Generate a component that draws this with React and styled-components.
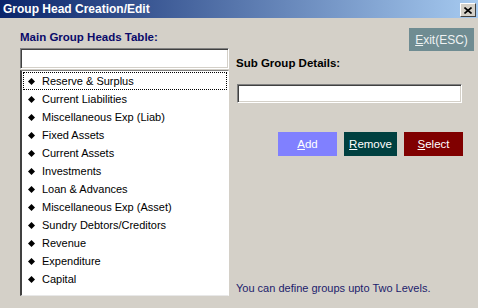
import React from 'react';
import styled, { createGlobalStyle } from 'styled-components';

const GlobalStyle = createGlobalStyle`
    html, body {
        margin: 0;
        padding: 0;
        background: #d4d0c8;
    }
    * {
        box-sizing: border-box;
    }
`;

const groups = [
    'Reserve & Surplus',
    'Current Liabilities',
    'Miscellaneous Exp (Liab)',
    'Fixed Assets',
    'Current Assets',
    'Investments',
    'Loan & Advances',
    'Miscellaneous Exp (Asset)',
    'Sundry Debtors/Creditors',
    'Revenue',
    'Expenditure',
    'Capital',
];

const Window = styled.div`
    width: 478px;
    height: 308px;
    display: flex;
    flex-direction: column;
    background: #d4d0c8;
    font-family: "Liberation Sans", Arial, sans-serif;
    font-size: 11px;
    overflow: hidden;
`;

const TitleBar = styled.div`
    height: 18px;
    flex: none;
    display: flex;
    align-items: center;
    justify-content: space-between;
    padding: 0 2px 0 3px;
    background: linear-gradient(to right, #0a246a, #a6caf0);
`;

const Title = styled.span`
    color: #fff;
    font-weight: bold;
    font-size: 12px;
`;

const CloseButton = styled.div`
    width: 16px;
    height: 14px;
    margin-top: 2px;
    display: flex;
    align-items: center;
    justify-content: center;
    background: #d4d0c8;
    border-top: 1px solid #fff;
    border-left: 1px solid #fff;
    border-right: 1px solid #404040;
    border-bottom: 1px solid #404040;
`;

const Body = styled.div`
    flex: 1;
    display: flex;
    gap: 7px;
    padding: 0 4px 0 20px;
`;

const LeftColumn = styled.div`
    width: 209px;
    display: flex;
    flex-direction: column;
    padding-top: 12px;
`;

const RightColumn = styled.div`
    flex: 1;
    display: flex;
    flex-direction: column;
    padding-top: 10px;
    padding-bottom: 13px;
`;

const Label = styled.div`
    color: ${props => props.color || '#0a0a6a'};
    font-weight: bold;
    font-size: 11.5px;
    line-height: 14px;
    margin-top: ${props => props.top || 0}px;
`;

const TextField = styled.div`
    height: ${props => props.h}px;
    width: ${props => props.w ? `${props.w}px` : 'auto'};
    margin-top: ${props => props.top || 0}px;
    margin-left: ${props => props.left || 0}px;
    background: #fff;
    border-top: 1px solid #808080;
    border-left: 1px solid #808080;
    border-right: 1px solid #fff;
    border-bottom: 1px solid #fff;
    box-shadow: inset 1px 1px 0 #404040, inset -1px -1px 0 #d4d0c8;
`;

const ListBox = styled.div`
    height: 226px;
    margin-top: 1px;
    background: #fff;
    border-top: 1px solid #808080;
    border-left: 2px solid #404040;
    border-right: 1px solid #fff;
    border-bottom: 1px solid #e8e8e8;
    padding: 1px 1px 0;
`;

const ListItem = styled.div`
    height: 18px;
    display: flex;
    align-items: center;
    gap: 7px;
    padding-left: 4px;
    color: #000;
    border: 1px dotted ${props => props.focused ? '#000' : 'transparent'};
`;

const Diamond = styled.svg`
    width: 7px;
    height: 7px;
    flex: none;
`;

const ExitButton = styled.div`
    align-self: flex-end;
    width: 65px;
    height: 23px;
    display: flex;
    align-items: center;
    justify-content: center;
    background: #6f8c92;
    color: #eef2f2;
    font-size: 12px;
`;

const ButtonRow = styled.div`
    display: flex;
    gap: 7px;
    margin-top: 29px;
    margin-left: 42px;
`;

const ActionButton = styled.div`
    width: ${props => props.w}px;
    height: 24px;
    display: flex;
    align-items: center;
    justify-content: center;
    background: ${props => props.bg};
    color: #fff;
    font-size: 11.5px;
`;

const Mnemonic = styled.span`
    text-decoration: underline;
`;

const Footer = styled.div`
    margin-top: auto;
    color: #1c1c6c;
    line-height: 14px;
`;

const Caption = ({ text }) => (
    <span>
        <Mnemonic>{text[0]}</Mnemonic>
        {text.slice(1)}
    </span>
);

export default function App() {
    return (
        <Window>
            <GlobalStyle />
            <TitleBar>
                <Title>Group Head Creation/Edit</Title>
                <CloseButton>
                    <svg width="8" height="7" viewBox="0 0 8 7">
                        <path d="M0.5 0.5 L7.5 6.5 M7.5 0.5 L0.5 6.5" stroke="#000" strokeWidth="1.6" />
                    </svg>
                </CloseButton>
            </TitleBar>
            <Body>
                <LeftColumn>
                    <Label>Main Group Heads Table:</Label>
                    <TextField h={21} top={4} />
                    <ListBox>
                        {groups.map((g, i) => (
                            <ListItem key={g} focused={i === 0}>
                                <Diamond viewBox="0 0 7 7">
                                    <path d="M3.5 0 L7 3.5 L3.5 7 L0 3.5 Z" fill="#000" />
                                </Diamond>
                                {g}
                            </ListItem>
                        ))}
                    </ListBox>
                </LeftColumn>
                <RightColumn>
                    <ExitButton><Caption text="Exit(ESC)" /></ExitButton>
                    <Label color="#000" top={5}>Sub Group Details:</Label>
                    <TextField h={19} w={225} top={14} left={1} />
                    <ButtonRow>
                        <ActionButton w={59} bg="#8080ff"><Caption text="Add" /></ActionButton>
                        <ActionButton w={53} bg="#004040"><Caption text="Remove" /></ActionButton>
                        <ActionButton w={59} bg="#800000"><Caption text="Select" /></ActionButton>
                    </ButtonRow>
                    <Footer>You can define groups upto Two Levels.</Footer>
                </RightColumn>
            </Body>
        </Window>
    );
}
